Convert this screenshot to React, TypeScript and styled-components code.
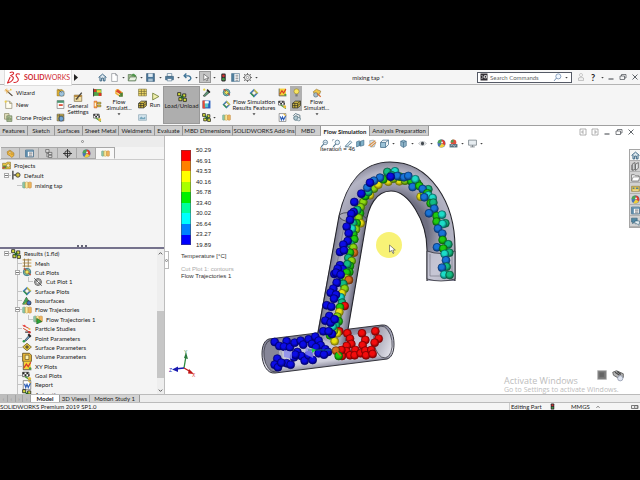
import React from "react";
import styled, { createGlobalStyle, css } from "styled-components";

const Global = createGlobalStyle`
  *, *::before, *::after { box-sizing: border-box; }
  html, body, #root { margin: 0; height: 100%; }
  body { background: #000; color: #222; font-family: "Lato", "Liberation Sans", sans-serif; font-size: 6px; line-height: 7px; overflow: hidden; }
  button, input { font: inherit; color: inherit; border: 0; padding: 0; margin: 0; background: none; }
  svg { display: block; }
`;

/* ---------- icons ---------- */

const K = "#3a3f45";
const steel = "#35617f";
const gold = "#e8b93a";

const cube = (
  <>
    <path d="M3 4l5-2 5 2v8l-5 3-5-3z" fill="#8fb4c8" stroke={steel} />
    <path d="M3 4l5 2 5-2M8 6v9" fill="none" stroke={steel} />
  </>
);
const magnifier = (
  <>
    <circle cx="9.5" cy="6" r="4" fill="#e4f0f8" stroke="#56788f" strokeWidth="1.4" />
    <path d="M6.500 9L2 14" stroke="#56788f" strokeWidth="2" />
  </>
);
const flowTube = (
  <>
    <path d="M1 4q3-2 4 0v8q-1 2-4 0z" fill="#8cc9a8" stroke="#5d8f7f" strokeWidth=".7" />
    <path d="M5 4q3-2 5 0v8q-2 2-5 0z" fill="#f0dc80" stroke="#b78a2b" strokeWidth=".7" />
    <path d="M10 4q3-2 5 0v8q-2 2-5 0z" fill="#eeb45c" stroke="#b8803a" strokeWidth=".7" />
    <path d="M7.500 3v10" stroke="#fff6c8" />
  </>
);
const diamond = (
  <>
    <path d="M8 1l7 7-7 7-7-7z" fill="#3b7fc0" />
    <path d="M8 1l7 7-7 2z" fill="#e6d53c" />
    <path d="M1 8l7 7V9z" fill="#2f9c4a" />
    <path d="M8 4l4 4-4 4-4-4z" fill="#f7f7ee" stroke="#333" strokeWidth=".8" />
  </>
);
const checker = (
  <>
    <path d="M1 2h10v7H1z" fill="#fff" stroke="#222" />
    <path d="M1 2h3v3H1zM7 2h3v3H7zM4 5h3v3H4zM10 5h2v3h-2z" fill="#222" />
    <path d="M5 9l9 6" stroke="#4b9b38" strokeWidth="2" />
    <circle cx="12" cy="12" r="2.500" fill={gold} />
  </>
);

const glyphs: Record<string, React.ReactNode> = {
  home: <path d="M1 8l7-6 7 6M3.500 7v7h3V9h3v5h3V7" fill="#dbe7ef" stroke={steel} strokeWidth="1.700" />,
  page: <path d="M3 1h7l3 3v11H3zM10 1v3h3" fill="#fff" stroke="#70767c" />,
  open: (
    <>
      <path d="M2 4h5l1 2h6v8H2z" fill="#9fb98e" stroke="#50704a" />
      <path d="M7 6c1-4 5-4 6-1l2-1-2 4-3-2z" fill="#4a9446" />
      <path d="M5 8h11l-3 6H2z" fill="#e9f1e2" stroke="#50704a" />
    </>
  ),
  save: (
    <>
      <path d="M1 1h14v14H1z" fill="#4a7699" stroke="#2d4d68" />
      <path d="M4 1h8v6H4z" fill="#dfeaf2" />
      <path d="M4 10h8v5H4z" fill="#a9c0d0" />
    </>
  ),
  print: (
    <>
      <path d="M4 1h8v5H4z" fill="#fff" stroke={steel} />
      <path d="M1 6h14v6H1z" fill="#527d9c" stroke="#2c526d" />
      <path d="M4 10h8v4H4z" fill="#fff" stroke={steel} />
    </>
  ),
  undo: <path d="M4 5h6q4 1 4 5-1 3-5 4M6 1L2 5l4 4" fill="none" stroke="#3e7396" strokeWidth="2.400" />,
  cursor: <path d="M5 2v11l3-3 2 4 2-1-2-4h4z" fill="#fff" stroke="#444" />,
  traffic: (
    <>
      <rect x="4" y="1" width="8" height="14" rx="2" fill="#302c2c" />
      <circle cx="8" cy="5" r="2.400" fill="#d03131" />
      <circle cx="8" cy="11" r="2.400" fill="#3f9a46" />
    </>
  ),
  list: (
    <>
      <path d="M1 1h14v14H1z" fill="#fff" stroke={steel} />
      <path d="M1 1h5v14H1z" fill="#4f7d9b" />
      <path d="M8 4h5M8 7h5M8 10h5M8 13h5" stroke={K} />
    </>
  ),
  gear: (
    <>
      <circle cx="8" cy="8" r="5.500" fill="#eee" stroke="#666" strokeWidth="1.600" />
      <circle cx="8" cy="8" r="2" fill="#fff" stroke="#666" />
      <path d="M8 0v3M8 13v3M0 8h3M13 8h3M2 2l2 2M12 12l2 2M2 14l2-2M12 4l2-2" stroke="#666" strokeWidth="1.600" />
    </>
  ),
  user: (
    <>
      <circle cx="8" cy="4" r="3" fill="#fff" stroke="#999" />
      <path d="M3 15V10q5-4 10 0v5z" fill="#eee" stroke="#999" />
    </>
  ),
  minimize: <path d="M3 12h10" stroke={K} strokeWidth="2" />,
  restore: <path d="M2 6h9v7H2zM5 6V3h9v7h-3" fill="none" stroke={K} strokeWidth="1.300" />,
  close: <path d="M3 3l10 10M13 3L3 13" stroke={K} strokeWidth="1.600" />,
  dockLeft: <path d="M2 2h12v12H2zM8 5L5 8l3 3z" fill="none" stroke="#888" strokeWidth="1.300" />,
  dockRight: <path d="M2 2h12v12H2zM8 5l3 3-3 3z" fill="none" stroke="#888" strokeWidth="1.300" />,
  search: (
    <>
      <circle cx="9.500" cy="6" r="4.500" fill="#f2f8ff" stroke="#6783a8" strokeWidth="1.300" />
      <path d="M6 9l-4 5" stroke="#6783a8" strokeWidth="1.600" />
    </>
  ),
  prompt: (
    <>
      <path d="M1 1h14v14H1z" fill="#302d33" />
      <path d="M3 4l4 4-4 4M9 5h4v5H9z" fill="none" stroke="#eee" strokeWidth="1.500" />
    </>
  ),
  wand: (
    <>
      <path d="M6 6l9 8" stroke="#4d4438" strokeWidth="2" />
      <path d="M5 1v9M1 5h9M2 2l6 6" stroke="#e2a136" strokeWidth="1.300" />
      <circle cx="12" cy="3" r="1.500" fill="#f0c23d" />
    </>
  ),
  newDoc: (
    <>
      <path d="M3 2h7l4 4v9H3z" fill="#fffdf0" stroke="#7b7458" />
      <path d="M10 2v4h4" fill="#d9d2a8" stroke="#7b7458" />
      <circle cx="3" cy="3" r="2" fill="#efcf4b" />
    </>
  ),
  clone: (
    <>
      <path d="M1 1h8v10H1z" fill="#e4dfbf" stroke="#6c6c42" />
      <path d="M5 5h9v10H5z" fill="#b7c69c" stroke="#4f6640" />
      <path d="M7 8v5M9 7v6M12 9v4" stroke="#4f6640" />
    </>
  ),
  material: (
    <>
      <path d="M2 3h9l3 3v8H2z" fill="#e3b12d" stroke="#93701d" />
      <circle cx="10" cy="10" r="4.500" fill="#9fc3dc" stroke="#4d728f" />
      <path d="M3 2l7 6" stroke="#5b4b1e" />
    </>
  ),
  units: (
    <>
      <path d="M2 1h12v14H2z" fill="#fff" stroke="#555" />
      <path d="M2 1h12v4H2z" fill="#4b9470" />
      <path d="M5 9h7" stroke="#d9442d" strokeWidth="3" />
    </>
  ),
  domain: (
    <>
      <path d="M2 2h12v12H2z" fill="#e6c346" stroke="#444" />
      <circle cx="9" cy="10" r="4.500" fill="#6fa2d0" stroke="#2b405e" />
      <path d="M2 5h12M6 2v12" stroke="#444" />
    </>
  ),
  settings: (
    <>
      <path d="M2 5h12v10H2z" fill="#f3dfa4" stroke="#725f33" />
      <path d="M2 5h12v3H2z" fill="#b78a3f" />
      <path d="M5 12l9-11" stroke="#45433f" strokeWidth="2" />
      <path d="M4 11h5" stroke="#725f33" />
    </>
  ),
  inlet: (
    <>
      <path d="M1 2h14v12H1z" fill="#53a348" />
      <path d="M1 2h5v5H1zM10 9h5v5h-5z" fill="#d83426" />
      <path d="M7 4h7v4H7z" fill="#f3d534" />
      <path d="M1 1v14" stroke="#222" strokeWidth="1.500" />
    </>
  ),
  goal: (
    <>
      <path d="M2 2h5v12H2z" fill="#f5b539" stroke="#d1472f" />
      <path d="M8 4h6v3H8zM8 9h6v3H8z" fill="#eec83a" stroke="#68612b" />
      <path d="M4 5v6" stroke="#fff" strokeWidth="2" />
    </>
  ),
  flag: checker,
  blob: (
    <>
      <path d="M2 4q3-4 7-1l5 4v6H8L2 9z" fill="#f0ae32" />
      <path d="M6 2l6 5-4 3-5-4z" fill="#d9442d" />
      <path d="M8 9l6-2v7H8z" fill="#49813b" />
      <path d="M4 7l6 4" stroke="#fff2a0" strokeWidth="1.600" />
    </>
  ),
  mesh: (
    <>
      <path d="M1 2h14v12H1z" fill="#f4dc68" stroke="#6d6634" />
      <path d="M1 6h14M1 10h14M6 2v12M11 2v12" stroke="#6d6634" strokeWidth="1.200" />
    </>
  ),
  meshDark: (
    <>
      <path d="M1 6l5-4h9v8l-5 4H1z" fill="#d7bd42" stroke="#2a2a22" strokeWidth="1.300" />
      <path d="M1 6h9v8M10 6l5-4M5 6v8M1 10h9l5-4" fill="none" stroke="#2a2a22" strokeWidth="1.300" />
    </>
  ),
  monitor: (
    <>
      <path d="M1 3h14v10H1z" fill="#d5e5ee" stroke="#7a97a8" />
      <path d="M3 9l3-3 3 3 4-3v5H3z" fill="#78a7bd" />
    </>
  ),
  run: <path d="M3 2l11 6-11 6z" fill="#f2f0b0" stroke="#6f7f32" strokeWidth="1.500" />,
  results: (
    <>
      <path d="M1 1h5v5H1zM9 3h5v5H9zM3 9h5v5H3zM10 10h5v5h-5z" fill="#d7dd3c" stroke="#222" strokeWidth="1.300" />
      <path d="M5 5l6 6M10 6l-4 4" stroke="#262" strokeWidth="2" />
    </>
  ),
  probe: (
    <>
      <path d="M2 14l8-9 3 3-8 7z" fill="#5d9c78" stroke="#222" />
      <path d="M9 3l5 5" stroke="#222" strokeWidth="3" />
      <circle cx="4" cy="3" r="2" fill="#e6d23c" />
    </>
  ),
  saveImage: (
    <>
      <path d="M1 1h14v14H1z" fill="#2b5fc0" />
      <path d="M1 1h5v14H1z" fill="#e34a35" />
      <path d="M5 3h6v10H5z" fill="#58c7c9" />
      <path d="M5 2h7v4H5z" fill="#fff" />
    </>
  ),
  cutPlot: (
    <>
      <circle cx="8" cy="8" r="6" fill="#86c3a0" stroke="#2a6a88" strokeWidth="1.300" />
      <path d="M3 2l11 11" stroke="#c14a35" strokeWidth="2" />
      <path d="M8 4l4 4-4 4-4-4z" fill="#f1e458" stroke="#444" />
    </>
  ),
  cutPlotGray: (
    <>
      <circle cx="8" cy="8" r="5.500" fill="#dedede" stroke="#444" strokeWidth="1.300" />
      <path d="M2 2l12 12M8 4l4 4-4 4-4-4z" fill="#fff" stroke="#444" strokeWidth="1.300" />
    </>
  ),
  surface: diamond,
  iso: (
    <>
      <path d="M7 2l7 11H1z" fill="#e6dc3a" stroke="#222" />
      <path d="M7 2l3 5-7 6H1z" fill="#3aa05a" />
      <circle cx="11" cy="11" r="3.500" fill="#3f6fc0" stroke="#222" />
    </>
  ),
  tube: flowTube,
  tubeRun: (
    <>
      {flowTube}
      <path d="M6 7l8 5-8 4z" fill="#2da83a" stroke="#155c20" />
    </>
  ),
  xy: (
    <>
      <path d="M2 1h12v13H2z" fill="#f4d33b" />
      <path d="M2 1v13h13" fill="none" stroke="#444" strokeWidth="1.300" />
      <path d="M3 11l4-6 3 4 4-7" fill="none" stroke="#d8392b" strokeWidth="2" />
      <circle cx="13" cy="12" r="2" fill="#4f9a40" />
    </>
  ),
  report: (
    <>
      <path d="M2 1h12v14H2z" fill="#fff" stroke="#555" />
      <path d="M4 6l2 6 2-5 2 5 4-8" fill="none" stroke="#2d5fb8" strokeWidth="2" />
      <path d="M10 1l4 4" stroke="#e0b23a" strokeWidth="2" />
    </>
  ),
  bulb: (
    <>
      <circle cx="8" cy="6" r="4.500" fill="#f8e560" stroke="#8c7b29" />
      <path d="M6 11h4v4H6z" fill="#777" />
    </>
  ),
  gears: (
    <>
      <circle cx="7" cy="9" r="4" fill="#b5ccd4" stroke="#4d6b78" strokeWidth="1.500" />
      <path d="M2 5l4-4 8 3v7" fill="none" stroke="#4d6b78" strokeWidth="1.500" />
      <circle cx="12" cy="11" r="3" fill="#d8e4ea" stroke="#4d6b78" />
    </>
  ),
  tools: (
    <>
      <path d="M2 6l5-4 7 3-2 5H4z" fill="#f1c84b" stroke="#8e6f28" />
      <circle cx="6" cy="11" r="3.500" fill="#a9bfca" stroke="#546a75" />
      <path d="M8 9l6 5" stroke="#d86d32" strokeWidth="2" />
    </>
  ),
  part: (
    <>
      <path d="M2 5l5-3 7 5v5l-4 3-3-3-4-2z" fill="#efb840" stroke="#9c6f20" />
      <circle cx="7" cy="6" r="1.800" fill="#fff3c0" stroke="#9c6f20" />
      <path d="M9 9h4" stroke="#9c6f20" />
    </>
  ),
  props: (
    <>
      <path d="M1 2h14v12H1z" fill="#fff" stroke={steel} strokeWidth="1.400" />
      <path d="M1 2h14v3H1zM1 5h4v9H1z" fill="#5e8cab" />
      <path d="M7 7h6M7 9h6M7 12h6" stroke={K} />
    </>
  ),
  config: (
    <>
      <path d="M3 1h6v5H3zM8 6h6v4H8zM8 11h6v4H8z" fill="#ddd" stroke="#555" strokeWidth="1.200" />
      <path d="M5 6v8h3M5 8h3" fill="none" stroke="#555" />
    </>
  ),
  target: (
    <>
      <circle cx="8" cy="8" r="5" fill="none" stroke="#222" strokeWidth="1.500" />
      <path d="M8 0v16M0 8h16" stroke="#222" strokeWidth="1.500" />
    </>
  ),
  ball: (
    <>
      <circle cx="8" cy="8" r="7" fill="#4872b8" />
      <path d="M8 8V1a7 7 0 0 1 6 10z" fill="#df3c30" />
      <path d="M8 8l6 3a7 7 0 0 1-10 3z" fill="#f0ce39" />
      <path d="M8 8V1A7 7 0 0 0 1 7z" fill="#4ba557" />
      <circle cx="9" cy="6" r="1.500" fill="#fff" />
    </>
  ),
  projects: (
    <>
      <path d="M1 4h6l2-2h6v12H1z" fill="#f0c63e" stroke="#7d6826" />
      <path d="M2 8h6v5H2z" fill="#3f9850" />
      <circle cx="11" cy="8" r="3" fill="#f4f0c0" stroke="#7d6826" />
      <path d="M1 13l5-3" stroke="#d33" strokeWidth="2" />
    </>
  ),
  branch: (
    <>
      <path d="M3 1v14" stroke="#333" strokeWidth="2" />
      <path d="M4 8h4" stroke="#333" strokeWidth="2" />
      <circle cx="11" cy="8" r="3.500" fill="#d9c53c" stroke="#444" strokeWidth="1.500" />
    </>
  ),
  grid: (
    <>
      <path d="M1 3h14M1 8h14M1 13h14" stroke="#c49a4c" strokeWidth="1.800" />
      <path d="M4 1v14M10 1v14" stroke="#8b7652" strokeWidth="1.500" />
    </>
  ),
  particles: (
    <>
      <path d="M1 2l10 5M2 7l10 6" stroke="#d0452f" strokeWidth="1.600" />
      <circle cx="4" cy="3" r="1.700" fill="#e44" />
      <circle cx="12" cy="8" r="1.700" fill="#eb4" />
      <circle cx="12" cy="13" r="2" fill="#c33" />
      <path d="M5 13h5" stroke="#444" strokeWidth="2" />
    </>
  ),
  point: (
    <>
      <path d="M4 12l7-8 2 2-7 7z" fill="#6fa7cf" stroke="#222" />
      <path d="M10 2l4 4" stroke="#222" strokeWidth="3" />
      <circle cx="3" cy="13" r="2" fill="#2b9b48" />
    </>
  ),
  surfParam: (
    <>
      <path d="M8 2l7 6-7 6-7-6z" fill="#e9c73f" stroke="#665824" strokeWidth="1.200" />
      <path d="M5 8h6M8 5v6" stroke="#333" strokeWidth="1.500" />
    </>
  ),
  volume: (
    <>
      <path d="M1 2h11l3 3v10H1z" fill="#e9b83a" stroke="#5c4717" strokeWidth="1.300" />
      <path d="M5 5h6v7H5z" fill="#fbf0b0" stroke="#5c4717" />
    </>
  ),
  zoomFit: (
    <>
      {magnifier}
      <path d="M7 6h5" stroke="#56788f" />
    </>
  ),
  zoomArea: (
    <>
      {magnifier}
      <path d="M1 1h3M1 1v3M15 12v3h-3" fill="none" stroke="#789" />
    </>
  ),
  prevView: <path d="M2 13l9-10 3 3-8 7zM2 14h12" fill="#dceaf1" stroke="#5b8096" strokeWidth="1.400" />,
  section: (
    <>
      <path d="M1 5l5-2v9l-5 2zM8 4l6-2v9l-6 2z" fill="#7fb0c8" stroke={steel} />
      <path d="M6 5l2-1v8l-2 1z" fill="#376482" />
    </>
  ),
  dynamic: (
    <>
      <path d="M3 3l7-1 4 4-3 8H4z" fill="#dde5e8" stroke="#798b95" />
      <path d="M1 12L13 3M5 14l9-8" stroke="#e08b38" strokeWidth="1.800" />
    </>
  ),
  orient: (
    <>
      <path d="M1 6h9v9H1z" fill="#9cc3d8" stroke={steel} strokeWidth="1.300" />
      <path d="M1 6l4-4h10v8l-5 5M10 6l5-4" fill="none" stroke={steel} strokeWidth="1.300" />
    </>
  ),
  cube,
  eye: (
    <>
      <path d="M1 8q7-7 14 0-7 7-14 0z" fill="#fff" stroke="#8a939a" />
      <circle cx="8" cy="8" r="3" fill="#43494f" />
    </>
  ),
  scene: (
    <>
      <circle cx="8" cy="6" r="5" fill="#e0503f" />
      <path d="M3 6a5 5 0 0 1 5-5v5z" fill="#4b9e53" />
      <path d="M1 9h14v6H1z" fill="#54707f" />
      <path d="M3 12l3-2 3 3 3-2" stroke="#fff" fill="none" />
    </>
  ),
  screen: (
    <>
      <path d="M1 2h14v9H1z" fill="#e7edf1" stroke="#6e7880" strokeWidth="1.300" />
      <path d="M8 11v3M4 14h8" stroke="#6e7880" strokeWidth="1.500" />
    </>
  ),
  library: (
    <>
      <path d="M3 3l4-2v12l-4 2zM8 4l5-3v10l-5 4z" fill="#e3e6e7" stroke="#555" strokeWidth="1.300" />
      <path d="M1 5v9h3" fill="none" stroke="#555" />
    </>
  ),
  folder: (
    <>
      <path d="M1 3h5l2 2h6v9H1z" fill="#f6f6f6" stroke="#666" strokeWidth="1.300" />
      <path d="M4 7h12l-3 7H1z" fill="#fff" stroke="#666" />
    </>
  ),
  palette: (
    <>
      <path d="M1 4h14v9H1z" fill="#e2c24f" stroke="#83713a" />
      <path d="M3 6h3v3H3zM9 6h4v3H9z" fill="#4f7f96" />
      <path d="M3 11h10" stroke="#fff" />
    </>
  ),
  forum: (
    <>
      <path d="M1 2h10v7H6l-3 3V9H1z" fill="#5288a4" stroke="#2f5a72" />
      <path d="M7 7h8v5h-1v3l-3-3H7z" fill="#e4eef3" stroke="#2f5a72" />
    </>
  ),
  stop: (
    <>
      <path d="M1 1h14v14H1z" fill="#777" stroke="#bbb" strokeWidth="1.500" />
      <path d="M4 4h7v7H4z" fill="#646464" />
    </>
  ),
  camera: (
    <>
      <path d="M1 3l5-2 9 4v5l-6 1-7-4z" fill="#b6b6b6" stroke="#666" strokeWidth="1.300" />
      <path d="M4 3l6 4M7 2l5 4" stroke="#444" strokeWidth="1.400" />
      <circle cx="11" cy="11" r="3.500" fill="#dfe4ef" stroke="#8b93a8" />
    </>
  ),
  tag: (
    <>
      <path d="M1 5h13v6H1z" fill="#eee" stroke="#555" strokeWidth="1.500" />
      <circle cx="10" cy="8" r="3" fill="#fff" stroke="#555" strokeWidth="1.500" />
    </>
  ),
  up: <path d="M4 10l4-4 4 4" fill="none" stroke="#444" strokeWidth="2" />,
  down: <path d="M4 6l4 4 4-4" fill="none" stroke="#444" strokeWidth="2" />,
  caret: <path d="M4 6h8l-4 5z" fill="#444" />,
};

const Icon = ({ name, size = 9 }: { name: string; size?: number }) => (
  <svg width={size} height={size} viewBox="0 0 16 16" aria-hidden="true">
    {glyphs[name]}
  </svg>
);

/* ---------- frame ---------- */

const Stage = styled.div`
  height: 100vh;
  padding: 70px 0;
  background: #000;
  display: flex;
`;
const AppWindow = styled.div`
  flex: 1;
  min-width: 0;
  display: flex;
  flex-direction: column;
  background: #f5f5f5;
  overflow: hidden;
`;

const TitleBar = styled.header`
  flex: 0 0 15px;
  min-height: 0;
  display: grid;
  grid-template-columns: auto 1fr auto;
  align-items: center;
  border-bottom: 1px solid #b4b4b4;
`;
const DocTitle = styled.span`
  text-align: center;
`;
const TitleSide = styled.div<{ $end?: boolean }>`
  display: flex;
  align-items: center;
  height: 14px;
  justify-content: ${(p) => (p.$end ? "flex-end" : "flex-start")};
`;
const Logo = styled.div`
  display: flex;
  align-items: center;
  align-self: flex-start;
  gap: 3px;
  width: 68px;
  height: 16px;
  margin-left: 4px;
  padding-left: 2px;
  background: #fff;
  border: 1px solid #ddd;
  border-top: 0;
  color: #cf2b32;
  font-size: 7px;
  line-height: 9px;
  z-index: 1;
`;
const IconButton = styled.button<{ $w?: number; $on?: boolean }>`
  flex: none;
  display: flex;
  align-items: center;
  justify-content: center;
  width: ${(p) => p.$w ?? 12}px;
  height: 12px;
  ${(p) => p.$on && css`background: #c4c4c4; border: 1px solid #999;`}
`;
const QuickBar = styled.div`
  display: flex;
  align-items: center;
  margin-left: 16px;
`;
const Search = styled.form`
  flex: none;
  display: flex;
  align-items: center;
  gap: 2px;
  width: 95px;
  height: 11px;
  padding: 0 2px;
  background: #fff;
  border: 1px solid #555a66;
  margin-right: 3px;
  input { flex: 1; min-width: 0; height: 8px; outline: 0; color: #555; }
  input::placeholder { color: #666; opacity: 1; }
`;
const Help = styled.span`
  font-size: 9px;
  line-height: 9px;
  font-weight: 700;
`;

/* ---------- ribbon ---------- */

const Ribbon = styled.div`
  flex: 0 0 40px;
  display: flex;
  align-items: center;
  padding-left: 4px;
`;
const Stack = styled.div<{ $w: number; $ml?: number }>`
  flex: none;
  width: ${(p) => p.$w}px;
  margin-left: ${(p) => p.$ml ?? 0}px;
  height: 38px;
  display: grid;
  grid-template-rows: repeat(3, 1fr);
`;
const Command = styled.button<{ $on?: boolean; $center?: boolean }>`
  display: flex;
  align-items: center;
  gap: 3px;
  justify-content: ${(p) => (p.$center ? "center" : "flex-start")};
  white-space: nowrap;
  background: ${(p) => (p.$on ? "#b0b0b0" : "none")};
`;
const BigCommand = styled.button<{ $w: number; $on?: boolean; $top?: boolean }>`
  flex: none;
  width: ${(p) => p.$w}px;
  height: 38px;
  display: flex;
  flex-direction: column;
  align-items: center;
  justify-content: flex-start;
  padding-top: ${(p) => (p.$top ? 2 : 6)}px;
  line-height: 6px;
  white-space: pre-line;
  ${(p) => p.$on && css`background: #aeaeae; outline: 1px solid #999; outline-offset: -1px;`}
  svg { flex: none; margin-bottom: 1px; }
`;

const TabRow = styled.nav`
  flex: 0 0 11px;
  min-height: 0;
  height: 11px;
  display: flex;
  background: #fff;
  border-top: 1px solid #a0a0a0;
  z-index: 1;
`;
const RibbonTab = styled.button<{ $w: number; $on?: boolean }>`
  flex: none;
  width: ${(p) => p.$w}px;
  height: 10px;
  background: ${(p) => (p.$on ? "#fafafa" : "#cfcfcf")};
  border-right: 1px solid #969696;
  border-bottom: ${(p) => (p.$on ? "0" : "1px solid #b4b4b4")};
  white-space: nowrap;
  text-align: center;
  font-weight: ${(p) => (p.$on ? 700 : 400)};
`;
const DocControls = styled.div`
  display: flex;
  margin-left: auto;
  padding-right: 3px;
  height: 12px;
`;

/* ---------- body ---------- */

const Body = styled.div`
  flex: 1;
  min-height: 0;
  display: flex;
`;
const SidePanel = styled.aside`
  flex: 0 0 165px;
  display: flex;
  flex-direction: column;
  border-right: 1px solid #bdbdbd;
  background: #f4f4f4;
`;
const PanelGrip = styled.div`
  flex: 0 0 11px;
  display: flex;
  align-items: center;
  justify-content: center;
  background: #ececec;
`;
const Ring = styled.i`
  width: 3px;
  height: 3px;
  border: 1px solid #888;
  border-radius: 50%;
`;
const PanelTabs = styled.div`
  flex: 0 0 12px;
  display: flex;
  padding-left: 1px;
  border-bottom: 1px solid #ccc;
`;
const PanelTab = styled.button<{ $on?: boolean }>`
  width: 19px;
  height: 12px;
  display: flex;
  align-items: center;
  justify-content: center;
  background: ${(p) => (p.$on ? "#f8f8f8" : "#cbcbcb")};
  border: 1px solid #a8a8a8;
  border-left-width: 0;
  border-bottom-color: ${(p) => (p.$on ? "#f8f8f8" : "#a8a8a8")};
`;
const ProjectTree = styled.ul`
  flex: 0 0 85px;
  margin: 0;
  padding: 1px 0 0 2px;
  list-style: none;
`;
const Splitter = styled.div`
  flex: 0 0 4px;
  display: flex;
  justify-content: center;
  border-bottom: 2px solid #75728c;
  &::after { content: ""; width: 10px; height: 2px; background: repeating-linear-gradient(90deg, #667 0 2px, #f4f4f4 2px 4px); }
`;
const ResultsPane = styled.div`
  flex: 1;
  min-height: 0;
  display: flex;
  overflow: hidden;
`;
const ResultsTree = styled.ul`
  flex: 1;
  height: calc(100% + 5px);
  margin: 0;
  padding: 0 0 0 2px;
  list-style: none;
  display: grid;
  grid-auto-rows: 1fr;
  background: linear-gradient(#c4c4c4, #c4c4c4) 17px 9px / 1px 100% no-repeat;
`;
const Row = styled.li<{ $level: number }>`
  display: flex;
  align-items: center;
  min-height: 0;
  padding-left: ${(p) => Math.max(p.$level, 0) * 11}px;
  white-space: nowrap;
  svg { flex: none; margin-right: 3px; }
`;
const Stem = styled.span<{ $elbow?: boolean }>`
  flex: none;
  align-self: stretch;
  width: 9px;
  display: flex;
  align-items: center;
  background:
    linear-gradient(#c4c4c4, #c4c4c4) 4px 50% / 5px 1px no-repeat,
    ${(p) => (p.$elbow ? "linear-gradient(#c4c4c4, #c4c4c4)" : "none")} 4px 0 / 1px 50% no-repeat;
`;
const Expander = styled.button`
  width: 5px;
  height: 5px;
  margin-left: 2px;
  border: 1px solid #aaa;
  background: linear-gradient(#777, #777) 0 1px / 100% 1px no-repeat #fff;
`;
const ScrollTrack = styled.div`
  flex: 0 0 7px;
  display: flex;
  flex-direction: column;
  background: #eee;
  justify-content: space-between;
`;
const ScrollArrow = styled.button`
  height: 8px;
  width: 7px;
`;
const ScrollRail = styled.div`
  flex: 1;
  display: grid;
  grid-template-rows: 53fr 66fr 8fr;
`;
const ScrollThumb = styled.div`
  grid-row: 2;
  background: #c6c6c6;
`;

const Viewport = styled.main`
  position: relative;
  flex: 1;
  min-width: 0;
  background: #fff;
  overflow: hidden;
`;
const Drawing = styled.svg`
  position: absolute;
  top: 0;
  left: 0;
  width: 475px;
  height: 258px;
`;
const HeadsUp = styled.div`
  position: absolute;
  top: 1px;
  left: 153px;
  display: flex;
`;
const Iteration = styled.div`
  position: absolute;
  top: 10px;
  left: 155px;
  font-family: "Liberation Sans", Arial, sans-serif;
`;
const Legend = styled.section`
  position: absolute;
  top: 11px;
  left: 16px;
  font-family: "Liberation Sans", Arial, sans-serif;
  p { margin: 0; }
`;
const Scale = styled.div`
  display: flex;
  gap: 5px;
  height: 102px;
`;
const Bands = styled.div`
  width: 10px;
  margin: 3px 0 4px;
  display: flex;
  flex-direction: column;
  outline: 1px solid rgba(80, 80, 80, 0.5);
  outline-offset: -1px;
`;
const Band = styled.i<{ $c: string }>`
  flex: 1;
  background: ${(p) => p.$c};
`;
const Values = styled.div`
  display: flex;
  flex-direction: column;
  justify-content: space-between;
`;
const Caption = styled.p<{ $dim?: boolean; $gap: number }>`
  padding-top: ${(p) => p.$gap}px;
  color: ${(p) => (p.$dim ? "#aaa" : "#333")};
`;
const TaskPane = styled.div`
  position: absolute;
  top: 13px;
  right: 0;
  width: 11px;
  border: 1px solid #a5a5a5;
  border-right: 0;
`;
const TaskButton = styled.button<{ $on?: boolean }>`
  display: flex;
  align-items: center;
  justify-content: center;
  width: 100%;
  height: 11px;
  background: ${(p) => (p.$on ? "#f6f6f6" : "#d2d2d2")};
  border-bottom: 1px solid #b0b0b0;
`;
const PanelHandle = styled.button`
  position: absolute;
  top: 115px;
  left: 0;
  width: 4px;
  height: 18px;
  display: flex;
  align-items: center;
  justify-content: center;
  background: #fff;
  border: 1px solid #bbb;
  border-left: 0;
`;
const Watermark = styled.div`
  position: absolute;
  right: 22px;
  bottom: 0;
  width: 114px;
  color: #bdbdbd;
  font-family: "Open Sans", sans-serif;
  font-size: 7px;
  line-height: 8px;
  white-space: nowrap;
  strong { display: block; font-weight: 400; font-size: 9px; line-height: 11px; }
`;
const PlayControls = styled.div`
  position: absolute;
  right: 16px;
  bottom: 12px;
  display: flex;
  gap: 5px;
`;

/* ---------- footer ---------- */

const SheetTabs = styled.nav`
  flex: 0 0 9px;
  display: flex;
  background: #ededed;
  border-top: 1px solid #bbb;
  border-bottom: 1px solid #bbb;
`;
const Pager = styled.div`
  width: 31px;
  display: grid;
  grid-template-columns: repeat(4, 1fr);
  background: #bdbdbd;
  button { border-right: 1px solid #a2a2a2; color: #888; font-size: 5px; line-height: 6px; }
`;
const SheetTab = styled.button<{ $w: number; $on?: boolean }>`
  width: ${(p) => p.$w}px;
  background: ${(p) => (p.$on ? "#fff" : "#d3d3d3")};
  border-right: 1px solid #999;
  font-weight: ${(p) => (p.$on ? 700 : 400)};
  white-space: nowrap;
`;
const StatusBar = styled.footer`
  flex: 0 0 7px;
  display: flex;
  align-items: center;
  overflow: hidden;
  white-space: nowrap;
`;
const StatusGroup = styled.div`
  margin-left: auto;
  width: 131px;
  display: grid;
  grid-template-columns: 38px 22px 24px 1fr 9px;
  align-items: center;
  border-left: 1px solid #ccc;
  padding-left: 1px;
`;

/* ---------- data ---------- */

const ribbonTabs: [string, number][] = [
  ["Features", 28], ["Sketch", 27], ["Surfaces", 28], ["Sheet Metal", 36], ["Weldments", 36], ["Evaluate", 28],
  ["MBD Dimensions", 50], ["SOLIDWORKS Add-Ins", 63], ["MBD", 25], ["Flow Simulation", 49], ["Analysis Preparation", 59],
];

type Node = { label: string; icon: string; level: number; open?: boolean };
const projectNodes: Node[] = [
  { label: "Projects", icon: "projects", level: -1 },
  { label: "Default", icon: "branch", level: 0, open: true },
  { label: "mixing tap", icon: "tube", level: 1 },
];
const resultNodes: Node[] = [
  { label: "Results (1.fld)", icon: "results", level: 0, open: true },
  { label: "Mesh", icon: "grid", level: 1 },
  { label: "Cut Plots", icon: "cutPlot", level: 1, open: true },
  { label: "Cut Plot 1", icon: "cutPlotGray", level: 2 },
  { label: "Surface Plots", icon: "surface", level: 1 },
  { label: "Isosurfaces", icon: "iso", level: 1 },
  { label: "Flow Trajectories", icon: "tube", level: 1, open: true },
  { label: "Flow Trajectories 1", icon: "tubeRun", level: 2 },
  { label: "Particle Studies", icon: "particles", level: 1 },
  { label: "Point Parameters", icon: "point", level: 1 },
  { label: "Surface Parameters", icon: "surfParam", level: 1 },
  { label: "Volume Parameters", icon: "volume", level: 1 },
  { label: "XY Plots", icon: "xy", level: 1 },
  { label: "Goal Plots", icon: "flag", level: 1 },
  { label: "Report", icon: "report", level: 1 },
  { label: "Animations", icon: "results", level: 1 },
];

const bands = ["#ff0000", "#ff8000", "#ffff00", "#a8ff00", "#00f000", "#00ff9c", "#00ffff", "#0080ff", "#0000ff"];
const values = ["50.29", "46.91", "43.53", "40.16", "36.78", "33.40", "30.02", "26.64", "23.27", "19.89"];

const shades: Record<string, [string, string]> = {
  n: ["#0c0ce6", "#000070"],
  b: ["#1874d8", "#083470"],
  c: ["#1cdcc8", "#08645e"],
  t: ["#12bc84", "#08583a"],
  g: ["#1ecc10", "#086006"],
  l: ["#8cd810", "#406808"],
  y: ["#e8e010", "#787008"],
  o: ["#d8701c", "#743408"],
  r: ["#f40c0c", "#7c0000"],
};
type Ball = [string, number, number];

/* spheres of the bend, in units of a third of a pixel */
const bendBalls: Ball[] = [
  ["y", 210, 178], ["l", 222, 158], ["y", 235, 146], ["y", 265, 137], ["y", 298, 136], ["l", 280, 128], ["g", 250, 130], ["l", 315, 134],
  ["t", 262, 108], ["c", 285, 106], ["g", 300, 122], ["t", 275, 118], ["g", 334, 136], ["y", 362, 182], ["g", 352, 142], ["l", 372, 172],
  ["l", 190, 198], ["g", 196, 180], ["t", 205, 168], ["l", 182, 214], ["g", 180, 232], ["t", 172, 222], ["l", 176, 246], ["y", 182, 262],
  ["g", 170, 262], ["t", 160, 262], ["l", 168, 280], ["g", 160, 295], ["c", 156, 278], ["g", 163, 310], ["t", 152, 325], ["l", 160, 335],
  ["o", 162, 350], ["g", 150, 350], ["t", 145, 366], ["l", 155, 375], ["g", 150, 390], ["t", 142, 385], ["g", 148, 408], ["c", 138, 408],
  ["l", 140, 424], ["o", 147, 432], ["g", 133, 436], ["t", 128, 424],
  ["b", 240, 125], ["b", 222, 134], ["b", 202, 155], ["b", 292, 120], ["n", 272, 122], ["n", 210, 140], ["n", 184, 173], ["n", 163, 198],
  ["b", 312, 124], ["b", 325, 120], ["c", 346, 130], ["b", 338, 153], ["g", 358, 150], ["t", 385, 160], ["b", 368, 159], ["g", 382, 172],
  ["c", 385, 178], ["b", 373, 184], ["c", 398, 186], ["g", 392, 202], ["t", 400, 200], ["b", 403, 218], ["b", 387, 232], ["g", 410, 240],
  ["c", 426, 236], ["g", 410, 257], ["t", 436, 262], ["c", 428, 264], ["b", 414, 278], ["b", 427, 293], ["g", 428, 312], ["t", 445, 325],
  ["b", 411, 334], ["g", 430, 338], ["t", 448, 350], ["c", 434, 354], ["b", 438, 373], ["t", 440, 392], ["b", 426, 395], ["c", 433, 416], ["t", 449, 417],
  ["n", 161, 228], ["n", 154, 234], ["n", 150, 252], ["n", 140, 272], ["n", 146, 292], ["n", 143, 315], ["n", 130, 326], ["n", 120, 348],
  ["n", 132, 343], ["n", 120, 388], ["n", 128, 400], ["n", 113, 398], ["n", 103, 414], ["n", 112, 440],
];
/* spheres of the riser and the cross pipe, same unit */
const pipeBalls: Ball[] = [
  ["g", 290, 8], ["l", 288, 24], ["o", 296, 30], ["t", 280, 42], ["l", 284, 56], ["y", 276, 70], ["c", 272, 82], ["t", 276, 98], ["r", 284, 108],
  ["g", 270, 112], ["y", 268, 126], ["l", 262, 140], ["g", 266, 154], ["c", 256, 152], ["t", 258, 166], ["r", 268, 184], ["y", 262, 190],
  ["l", 252, 182], ["g", 240, 196], ["y", 254, 214], ["c", 248, 170],
  ["n", 258, 8], ["n", 272, 14], ["n", 260, 38], ["n", 250, 56], ["n", 242, 68], ["n", 258, 74], ["n", 252, 86], ["n", 230, 106], ["n", 244, 110],
  ["n", 238, 138], ["n", 226, 152], ["n", 242, 158], ["n", 254, 148], ["n", 220, 184], ["n", 246, 192], ["n", 236, 184],
  ["n", 74, 216], ["n", 88, 228], ["n", 110, 214], ["n", 102, 230], ["n", 120, 232], ["n", 134, 218], ["n", 152, 212], ["n", 160, 224],
  ["n", 176, 208], ["n", 186, 222], ["n", 196, 200], ["n", 206, 212], ["n", 212, 226], ["n", 198, 232], ["n", 226, 238], ["n", 234, 246],
  ["n", 82, 266], ["n", 74, 284], ["n", 84, 292], ["n", 110, 280], ["n", 122, 284], ["n", 132, 262], ["n", 142, 246], ["n", 154, 258],
  ["n", 164, 272], ["n", 176, 256], ["n", 188, 270], ["n", 206, 250], ["n", 222, 254], ["n", 136, 254], ["n", 94, 278],
  ["r", 292, 190], ["r", 300, 206], ["r", 304, 222], ["r", 290, 228], ["r", 336, 190], ["r", 346, 210], ["r", 338, 226], ["r", 376, 184],
  ["r", 386, 206], ["r", 374, 218], ["r", 290, 244], ["r", 300, 256], ["r", 316, 240], ["r", 314, 256], ["r", 332, 250], ["r", 346, 242],
  ["r", 348, 256], ["r", 364, 240], ["r", 368, 252], ["r", 276, 258], ["r", 274, 240], ["o", 258, 242], ["g", 266, 258],
];

const Balls = ({ list, x, y }: { list: Ball[]; x: number; y: number }) => (
  <g transform={`translate(${x} ${y}) scale(0.3333)`}>
    {list.map(([tone, cx, cy], i) => (
      <circle key={i} cx={cx} cy={cy} r={12} fill={`url(#ball-${tone})`} stroke={shades[tone][1]} strokeWidth={2} />
    ))}
  </g>
);

const Model = () => (
  <Drawing viewBox="165 136 475 258" role="img" aria-label="Flow trajectories in a mixing tap">
    <defs>
      {Object.entries(shades).map(([k, [a, b]]) => (
        <radialGradient key={k} id={`ball-${k}`} cx="0.45" cy="0.4" r="0.62">
          <stop offset="0.4" stopColor={a} />
          <stop offset="1" stopColor={b} />
        </radialGradient>
      ))}
      <linearGradient id="riser" gradientUnits="userSpaceOnUse" x1="331" y1="255" x2="360" y2="260">
        <stop offset="0" stopColor="#77778a" />
        <stop offset="0.4" stopColor="#b4b4c6" />
        <stop offset="0.8" stopColor="#a2a2b4" />
        <stop offset="1" stopColor="#6a6a7c" />
      </linearGradient>
      <radialGradient id="bend" gradientUnits="userSpaceOnUse" cx="392" cy="232" r="72">
        <stop offset="0.5" stopColor="#6e6e80" />
        <stop offset="0.68" stopColor="#a4a4b6" />
        <stop offset="0.84" stopColor="#b4b4c4" />
        <stop offset="1" stopColor="#808092" />
      </radialGradient>
      <linearGradient id="cross" gradientUnits="userSpaceOnUse" x1="325" y1="330" x2="330" y2="368">
        <stop offset="0" stopColor="#74748a" />
        <stop offset="0.4" stopColor="#b2b2c6" />
        <stop offset="0.75" stopColor="#e4e4ee" />
        <stop offset="1" stopColor="#7c7c90" />
      </linearGradient>
      <linearGradient id="rim" x1="0" y1="0" x2="1" y2="1">
        <stop offset="0" stopColor="#8c8c9c" />
        <stop offset="1" stopColor="#eeeef6" />
      </linearGradient>
    </defs>

    <path d="M269 339L382 325C390 324 394 334 394 344C394 353 391 358 387 359L275 373C267 374 262 364 262 354C262 345 265 340 269 339Z" fill="url(#cross)" stroke="#34343c" />
    <ellipse cx="383" cy="342" rx="9" ry="16" transform="rotate(-8 383 342)" fill="url(#rim)" stroke="#34343c" strokeWidth="0.7" />
    <ellipse cx="273" cy="356" rx="9" ry="16" transform="rotate(-8 273 356)" fill="#868698" stroke="#34343c" strokeWidth="0.7" />
    <path d="M278 344L370 333V354L281 367Z" fill="#c9c9d8" opacity="0.7" />
    <path d="M317 334L339 216L366 224L346 342C340 349 326 343 317 334Z" fill="url(#riser)" />
    <path d="M339 216C346 184 362 162 390 162C430 162 455 202 455 248V281H427V250C427 220 408 191 391 191C376 191 368 207 366 224L350 228Z" fill="url(#bend)" />
    <path d="M318 333L339 216C346 184 362 162 390 162C430 162 455 202 455 248V281" fill="none" stroke="#25252c" strokeWidth="1.100" />
    <path d="M346 341L366 224C368 207 376 191 391 191C408 191 427 220 427 250V281" fill="none" stroke="#25252c" strokeWidth="1.100" />
    <path d="M324 334L344 226" fill="none" stroke="#5b5b68" strokeWidth="0.5" />
    <ellipse cx="353" cy="218" rx="14" ry="5" transform="rotate(9 353 218)" fill="none" stroke="#34343c" strokeWidth="0.7" />
    <path d="M427 251Q441 256 455 251V279Q441 283 427 279Z" fill="#cfcfdc" fillOpacity="0.7" stroke="#34343c" strokeWidth="0.8" />
    <path d="M430 254V276M452 254V276M430 276H452" fill="none" stroke="#6b6b7a" strokeWidth="0.6" />

    <Balls list={bendBalls} x={300} y={136} />
    <Balls list={pipeBalls} x={250} y={270} />
    <path d="M284 350l8 2v7l-8-2zM306 347l8 3-1 8-8-4z" fill="#8a8af0" opacity="0.8" />
    <path d="M308 350h24" stroke="#137a68" strokeWidth="0.8" />
    <path d="M312 348l4 2-4 3z" fill="#20d040" />
    <path d="M336 350l5 6" stroke="#d86018" strokeWidth="1.500" />

    <circle cx="389" cy="245" r="13" fill="#f8f276" />
    <path d="M389.500 245v7l2-1.500 1.500 3 1-.5-1.200-3h2.500z" fill="#fff" stroke="#444" strokeWidth="0.6" />

    <g fill="none" strokeWidth="1.300">
      <path d="M184 368L186 356" stroke="#2b8a3d" />
      <path d="M184 368L175 369" stroke="#1a1ab0" />
      <path d="M184 368L191 372" stroke="#c01818" />
    </g>
    <path d="M184 358l2-6 2 7z" fill="#2b7a3d" />
    <path d="M178 366.500l-6 3 6 2.500z" fill="#1a1ab0" />
    <path d="M189 369l5 5-6-.5z" fill="#c01818" />
    <g fontFamily="Liberation Sans, sans-serif" fontSize="5">
      <text x="184" y="354" fill="#2b8a3d">Y</text>
      <text x="169" y="372" fill="#1a1ab0">Z</text>
      <text x="192" y="377" fill="#e03838">X</text>
    </g>
  </Drawing>
);

const TreeRow = ({ node }: { node: Node }) => (
  <Row $level={node.level}>
    {node.level >= 0 && <Stem $elbow={node.level === 2}>{node.open && <Expander aria-label={`Collapse ${node.label}`} />}</Stem>}
    <Icon name={node.icon} size={node.level < 0 ? 9 : 10} />
    {node.label}
  </Row>
);

const IconStack = ({ icons, w = 10, ml, on = [] }: { icons: string[]; w?: number; ml?: number; on?: number[] }) => (
  <Stack $w={w} $ml={ml}>
    {icons.map((n, i) => (
      <Command key={n + i} $center $on={on.includes(i)} aria-label={n}>
        <Icon name={n} />
      </Command>
    ))}
  </Stack>
);

const Drop = ({ w = 6 }: { w?: number }) => (
  <IconButton $w={w} aria-label="More options">
    <Icon name="caret" size={5} />
  </IconButton>
);

export default function App() {
  return (
    <Stage>
      <Global />
      <AppWindow>
        <TitleBar>
          <TitleSide>
            <Logo>
              <svg width="14" height="13" viewBox="0 0 26 24" fill="none" stroke="#d8232a" strokeWidth="2" aria-hidden="true">
                <path d="M5 3c5-2 8-1 7 2-1 2-4 3-6 4M8 10c4 0 5 3 2 7-2 3-5 4-9 5L6 11" />
                <path d="M24 6c-5-2-8 0-7 3 1 3 5 4 4 8-1 3-5 5-9 4" />
              </svg>
              <span><b>SOLID</b>WORKS</span>
            </Logo>
            <IconButton $w={8} aria-label="Expand menu">
              <svg width="4" height="7" viewBox="0 0 4 7"><path d="M0 0l4 3.500L0 7z" fill="#222" /></svg>
            </IconButton>
            <QuickBar>
              <IconButton aria-label="Home"><Icon name="home" /></IconButton>
              <IconButton aria-label="New document"><Icon name="page" /></IconButton>
              <Drop />
              <IconButton aria-label="Open"><Icon name="open" size={10} /></IconButton>
              <Drop />
              <IconButton $w={13} aria-label="Save"><Icon name="save" /></IconButton>
              <Drop />
              <IconButton aria-label="Print"><Icon name="print" /></IconButton>
              <Drop />
              <IconButton aria-label="Undo"><Icon name="undo" /></IconButton>
              <Drop />
              <IconButton $on aria-label="Select"><Icon name="cursor" /></IconButton>
              <Drop />
              <IconButton aria-label="Rebuild"><Icon name="traffic" /></IconButton>
              <IconButton aria-label="File properties"><Icon name="list" /></IconButton>
              <IconButton aria-label="Options"><Icon name="gear" /></IconButton>
              <Drop />
            </QuickBar>
          </TitleSide>
          <DocTitle>mixing tap *</DocTitle>
          <TitleSide $end>
            <Search>
              <Icon name="prompt" size={8} />
              <input aria-label="Search Commands" placeholder="Search Commands" />
              <Icon name="search" />
              <Icon name="caret" size={5} />
            </Search>
            <IconButton aria-label="Sign in"><Icon name="user" size={8} /></IconButton>
            <IconButton aria-label="Help"><Help>?</Help></IconButton>
            <Drop />
            <IconButton $w={11} aria-label="Minimize"><Icon name="minimize" size={8} /></IconButton>
            <IconButton $w={13} aria-label="Restore"><Icon name="restore" size={8} /></IconButton>
            <IconButton $w={11} aria-label="Close"><Icon name="close" size={8} /></IconButton>
          </TitleSide>
        </TitleBar>

        <Ribbon>
          <Stack $w={51}>
            <Command><Icon name="wand" />Wizard</Command>
            <Command><Icon name="newDoc" />New</Command>
            <Command><Icon name="clone" />Clone Project</Command>
          </Stack>
          <IconStack icons={["material", "units", "domain"]} />
          <BigCommand $w={26}><Icon name="settings" size={10} />{"General\nSettings"}</BigCommand>
          <IconStack icons={["inlet", "goal", "flag"]} ml={1} />
          <BigCommand $w={34} $top><Icon name="blob" size={10} />{"Flow\nSimulati..."}<Icon name="caret" size={6} /></BigCommand>
          <IconStack icons={["mesh", "meshDark", "monitor"]} ml={1} />
          <BigCommand $w={16}><Icon name="run" size={9} />Run</BigCommand>
          <BigCommand $w={37} $on><Icon name="results" size={10} />Load/Unload</BigCommand>
          <IconStack icons={["probe", "saveImage", "results"]} ml={1} />
          <Stack $w={8}><i /><i /><Drop /></Stack>
          <IconStack icons={["cutPlot", "surface", "tube"]} ml={2} />
          <BigCommand $w={46} $top><Icon name="surface" size={10} />{"Flow Simulation\nResults Features"}<Icon name="caret" size={6} /></BigCommand>
          <IconStack icons={["xy", "flag", "report"]} />
          <IconStack icons={["bulb", "meshDark", "gears"]} w={12} ml={3} on={[0, 1]} />
          <BigCommand $w={29} $top><Icon name="tools" size={10} />{"Flow\nSimulati..."}<Icon name="caret" size={6} /></BigCommand>
        </Ribbon>

        <TabRow>
          {ribbonTabs.map(([t, w]) => (
            <RibbonTab key={t} $w={w} $on={t === "Flow Simulation"}>{t}</RibbonTab>
          ))}
          <DocControls>
            {["dockLeft", "dockRight", "minimize", "restore", "close"].map((n) => (
              <IconButton key={n} aria-label={n}><Icon name={n} size={8} /></IconButton>
            ))}
          </DocControls>
        </TabRow>

        <Body>
          <SidePanel>
            <PanelGrip><Ring /></PanelGrip>
            <PanelTabs>
              {["part", "props", "config", "target", "ball", "tube"].map((n) => (
                <PanelTab key={n} $on={n === "tube"} aria-label={n}><Icon name={n} /></PanelTab>
              ))}
            </PanelTabs>
            <ProjectTree>
              {projectNodes.map((n) => <TreeRow key={n.label} node={n} />)}
            </ProjectTree>
            <Splitter />
            <ResultsPane>
              <ResultsTree>
                {resultNodes.map((n) => <TreeRow key={n.label} node={n} />)}
              </ResultsTree>
              <ScrollTrack>
                <ScrollArrow aria-label="Scroll up"><Icon name="up" size={7} /></ScrollArrow>
                <ScrollRail><ScrollThumb /></ScrollRail>
                <ScrollArrow aria-label="Scroll down"><Icon name="down" size={7} /></ScrollArrow>
              </ScrollTrack>
            </ResultsPane>
          </SidePanel>

          <Viewport>
            <Model />
            <Iteration>Iteration = 46</Iteration>
            <HeadsUp>
              {["zoomFit", "zoomArea", "prevView", "section", "dynamic"].map((n) => (
                <IconButton key={n} aria-label={n}><Icon name={n} /></IconButton>
              ))}
              <IconButton aria-label="View orientation"><Icon name="orient" /></IconButton><Drop w={7} />
              <IconButton aria-label="Display style"><Icon name="cube" /></IconButton><Drop w={7} />
              <IconButton aria-label="Hide or show items"><Icon name="eye" /></IconButton><Drop w={7} />
              <IconButton aria-label="Edit appearance"><Icon name="ball" /></IconButton>
              <IconButton aria-label="Apply scene"><Icon name="scene" /></IconButton><Drop w={7} />
              <IconButton aria-label="View settings"><Icon name="screen" /></IconButton><Drop w={7} />
            </HeadsUp>
            <Legend>
              <Scale>
                <Bands>{bands.map((c) => <Band key={c} $c={c} />)}</Bands>
                <Values>{values.map((v) => <span key={v}>{v}</span>)}</Values>
              </Scale>
              <Caption $gap={4}>Temperature [°C]</Caption>
              <Caption $gap={6} $dim>Cut Plot 1: contours</Caption>
              <Caption $gap={0}>Flow Trajectories 1</Caption>
            </Legend>
            <PanelHandle aria-label="Collapse panel"><Ring /></PanelHandle>
            <TaskPane>
              {["home", "library", "folder", "palette", "ball", "props", "forum"].map((n, i) => (
                <TaskButton key={n} $on={i === 0} aria-label={n}><Icon name={n} /></TaskButton>
              ))}
            </TaskPane>
            <PlayControls>
              <Icon name="stop" size={10} />
              <Icon name="camera" size={12} />
            </PlayControls>
            <Watermark><strong>Activate Windows</strong>Go to Settings to activate Windows.</Watermark>
          </Viewport>
        </Body>

        <SheetTabs>
          <Pager>
            <button aria-label="First">‹</button>
            <button aria-label="Previous">‹</button>
            <button aria-label="Next">›</button>
            <button aria-label="Last">›</button>
          </Pager>
          <SheetTab $w={29} $on>Model</SheetTab>
          <SheetTab $w={30}>3D Views</SheetTab>
          <SheetTab $w={50}>Motion Study 1</SheetTab>
        </SheetTabs>
        <StatusBar>
          <span>SOLIDWORKS Premium 2019 SP1.0</span>
          <StatusGroup>
            <span>Editing Part</span>
            <Icon name="traffic" size={7} />
            <span>MMGS</span>
            <Icon name="up" size={6} />
            <Icon name="tag" size={8} />
          </StatusGroup>
        </StatusBar>
      </AppWindow>
    </Stage>
  );
}
